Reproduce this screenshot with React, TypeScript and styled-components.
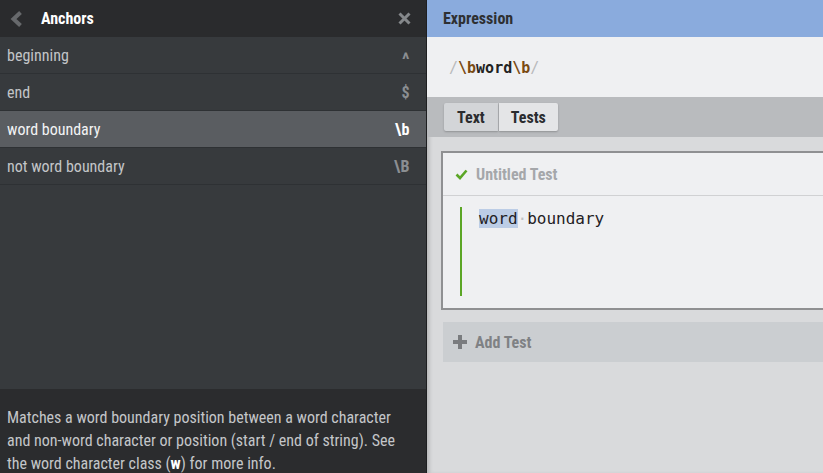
import React from "react";
import styled, { createGlobalStyle } from "styled-components";

const Global = createGlobalStyle`
  html, body { margin: 0; padding: 0; }
  body { font-family: Roboto, "Liberation Sans", sans-serif; font-stretch: 87.5%; overflow: hidden; }
  * { box-sizing: border-box; }
`;

const Page = styled.div`
  display: flex;
  width: 823px;
  height: 473px;
  overflow: hidden;
`;

const Left = styled.aside`
  width: 427px;
  flex: none;
  display: flex;
  flex-direction: column;
  background: #373a3d;
  border-right: 1px solid #1e1f21;
`;

const PanelHeader = styled.header`
  height: 37px;
  flex: none;
  display: flex;
  align-items: center;
  background: #2a2b2d;
  padding: 0 15px 0 10px;
`;

const HeaderTitle = styled.h1`
  flex: 1;
  margin: 0 0 0 18px;
  font-size: 16px;
  font-weight: 700;
  color: #ffffff;
`;

const IconButton = styled.span`
  display: flex;
  align-items: center;
`;

const List = styled.ul`
  list-style: none;
  margin: 0;
  padding: 0;
`;

const Row = styled.li<{ $active?: boolean }>`
  height: 37px;
  display: flex;
  align-items: center;
  justify-content: space-between;
  padding: 1px 16px 0 7px;
  border-bottom: 1px solid #2e3134;
  background: ${(p) => (p.$active ? "#5a5d61" : "transparent")};
  color: ${(p) => (p.$active ? "#f2f3f4" : "#c3c5c8")};
  font-size: 16px;
`;

const Token = styled.span<{ $active?: boolean; $caret?: boolean }>`
  display: inline-block;
  font-weight: 700;
  font-size: ${(p) => (p.$caret ? "19px" : "16px")};
  color: ${(p) => (p.$active ? "#ffffff" : "#8b8e92")};
  letter-spacing: 0.5px;
  transform: ${(p) => (p.$caret ? "translateY(4px)" : "none")};
`;

const Spacer = styled.div`
  flex: 1;
`;

const Description = styled.p`
  margin: 0;
  height: 84px;
  flex: none;
  background: #2b2c2e;
  padding: 17px 14px 0 7px;
  color: #c4c6c9;
  font-size: 16px;
  line-height: 23px;
`;

const Strong = styled.b`
  color: #ffffff;
`;

const Right = styled.main`
  flex: 1;
  min-width: 0;
  display: flex;
  flex-direction: column;
  background: #d9dadc;
  box-shadow: inset 4px 0 4px -2px rgba(0, 0, 0, 0.18);
`;

const ExprHeader = styled.div`
  height: 37px;
  flex: none;
  display: flex;
  align-items: center;
  padding-left: 16px;
  background: #8aabdd;
  color: #2e3033;
  font-size: 16px;
  font-weight: 700;
`;

const ExprBody = styled.div`
  height: 60px;
  flex: none;
  display: flex;
  align-items: center;
  padding: 1px 0 0 22px;
  background: #eff0f2;
  font-family: "DejaVu Sans Mono", monospace;
  font-stretch: normal;
  font-size: 15px;
  font-weight: 700;
  color: #222;
`;

const Slash = styled.span`
  color: #b9babc;
  font-weight: 400;
`;

const Esc = styled.span`
  color: #7a4b12;
`;

const TabBar = styled.div`
  height: 40px;
  flex: none;
  display: flex;
  align-items: flex-start;
  padding: 6px 0 0 17px;
  background: #b9bbbe;
`;

const Tab = styled.button<{ $active?: boolean }>`
  height: 28px;
  border: none;
  border-radius: 0;
  padding: 0 ${(p) => (p.$active ? "12px" : "13px")};
  background: ${(p) => (p.$active ? "#e4e5e7" : "#d3d5d8")};
  box-shadow: 0 1px 2px rgba(0, 0, 0, 0.22);
  font-family: Roboto, sans-serif;
  font-stretch: 87.5%;
  font-size: 16px;
  font-weight: 700;
  color: #2a2c2f;
  &:first-child { border-radius: 2px 0 0 2px; }
  &:last-child { border-radius: 0 2px 2px 0; margin-left: 1px; }
`;

const Content = styled.div`
  flex: 1;
  padding: 14px 0 0 14px;
  display: flex;
  flex-direction: column;
  gap: 12px;
  margin-right: -20px;
`;

const Card = styled.section`
  height: 159px;
  border: 2px solid #8f9092;
  background: #eff0f2;
  display: flex;
  flex-direction: column;
`;

const CardHeader = styled.div`
  height: 43px;
  flex: none;
  display: flex;
  align-items: center;
  gap: 8px;
  padding-left: 12px;
  border-bottom: 1px solid #d0d1d3;
  font-size: 16px;
  font-weight: 700;
  color: #a5a7aa;
`;

const Editor = styled.div`
  margin: 11px 0 0 17px;
  height: 89px;
  border-left: 2px solid #5ba626;
  padding: 2px 0 0 17px;
  font-family: "DejaVu Sans Mono", monospace;
  font-stretch: normal;
  font-size: 16px;
  line-height: 20px;
  color: #1f2124;
`;

const Match = styled.span`
  background: #bccde6;
`;

const Space = styled.span`
  color: #c0c2c4;
`;

const AddTest = styled.div`
  margin-left: 2px;
  height: 40px;
  display: flex;
  align-items: center;
  gap: 8px;
  padding-left: 10px;
  background: #cbced1;
  font-size: 16px;
  font-weight: 700;
  color: #7f8184;
`;

const rows = [
  { label: "beginning", token: "^", caret: true },
  { label: "end", token: "$" },
  { label: "word boundary", token: "\\b", active: true },
  { label: "not word boundary", token: "\\B" },
];

export default function App() {
  return (
    <Page>
      <Global />
      <Left>
        <PanelHeader>
          <IconButton>
            <svg width="13" height="16" viewBox="0 0 13 16">
              <path d="M10.5 1.5 L3.5 8 L10.5 14.5" fill="none" stroke="#67696c" strokeWidth="4" />
            </svg>
          </IconButton>
          <HeaderTitle>Anchors</HeaderTitle>
          <IconButton>
            <svg width="13" height="13" viewBox="0 0 13 13">
              <path d="M1.5 1.5 L11.5 11.5 M11.5 1.5 L1.5 11.5" stroke="#85888b" strokeWidth="3" />
            </svg>
          </IconButton>
        </PanelHeader>
        <List>
          {rows.map((r) => (
            <Row key={r.label} $active={r.active}>
              <span>{r.label}</span>
              <Token $active={r.active} $caret={r.caret}>{r.token}</Token>
            </Row>
          ))}
        </List>
        <Spacer />
        <Description>
          Matches a word boundary position between a word character and non-word character or position (start / end of string). See the word character class (<Strong>w</Strong>) for more info.
        </Description>
      </Left>
      <Right>
        <ExprHeader>Expression</ExprHeader>
        <ExprBody>
          <Slash>/</Slash>
          <Esc>\b</Esc>word<Esc>\b</Esc>
          <Slash>/</Slash>
        </ExprBody>
        <TabBar>
          <Tab>Text</Tab>
          <Tab $active>Tests</Tab>
        </TabBar>
        <Content>
          <Card>
            <CardHeader>
              <svg width="13" height="11" viewBox="0 0 13 11">
                <path d="M1.5 5.5 L5 9 L11.5 1.5" fill="none" stroke="#5ba626" strokeWidth="2.6" />
              </svg>
              Untitled Test
            </CardHeader>
            <Editor>
              <Match>word</Match>
              <Space>·</Space>boundary
            </Editor>
          </Card>
          <AddTest>
            <svg width="14" height="14" viewBox="0 0 14 14">
              <path d="M7 0 V14 M0 7 H14" stroke="#7a7c7f" strokeWidth="4" />
            </svg>
            Add Test
          </AddTest>
        </Content>
      </Right>
    </Page>
  );
}
